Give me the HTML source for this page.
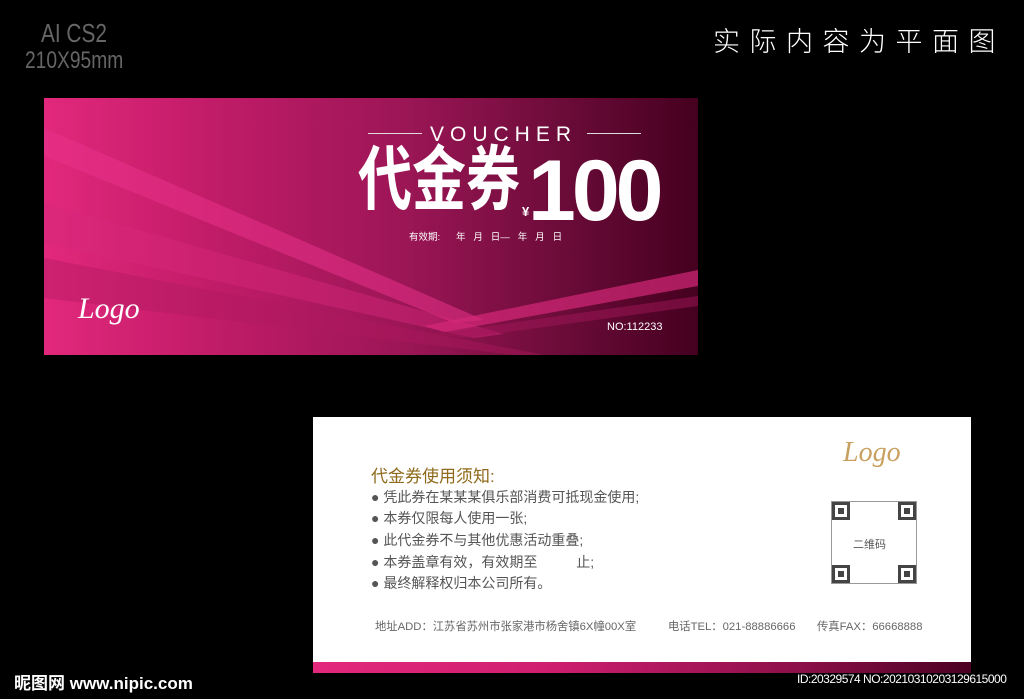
<!DOCTYPE html>
<html><head><meta charset="utf-8"><style>
*{margin:0;padding:0;box-sizing:border-box}
body{width:1024px;height:699px;background:#000;position:relative;overflow:hidden;font-family:"Liberation Sans","Noto Sans CJK SC",sans-serif}
.a{position:absolute;white-space:nowrap}
.front{left:44px;top:98px;width:654px;height:257px;background:linear-gradient(90deg,#e2287c 0%,#c21c68 25%,#9c1656 55%,#6a0b38 80%,#45001f 100%);overflow:hidden}
.back{left:313px;top:417px;width:658px;height:256px;background:#fff}
.band{left:0;bottom:0;width:658px;height:11px;background:linear-gradient(90deg,#e2287c 0%,#d01f70 35%,#8a0f48 75%,#4a0022 100%)}
.logo{font-family:"Liberation Serif",serif;font-style:italic}
.li{font-size:14px;color:#555;left:58px}
.q{position:absolute;width:18px;height:18px;background:#fff;border:3px solid #444}
.q:after{content:"";position:absolute;left:3px;top:3px;width:6px;height:6px;background:#444}
</style></head><body>
<div class="a" style="left:41px;top:18px;font-size:26px;color:#666;transform:scaleX(0.8);transform-origin:left">AI CS2</div>
<div class="a" style="left:25px;top:47px;font-size:24px;color:#666;transform:scaleX(0.8);transform-origin:left">210X95mm</div>
<div class="a" style="left:713px;top:20px;font-size:27px;color:#fff;letter-spacing:9.5px;font-weight:300">实际内容为平面图</div>

<div class="a front">
<svg width="654" height="257" style="position:absolute;left:0;top:0">
<polygon points="0,30 0,58 410,225 440,222" fill="#e8328a" opacity="0.55"/>
<polygon points="0,105 0,145 430,240 460,236" fill="#d8287c" opacity="0.45"/>
<polygon points="0,160 0,200 470,257 500,257" fill="#b01a60" opacity="0.4"/>
<polygon points="380,228 654,172 654,188 400,234" fill="#d42878" opacity="0.7"/>
<polygon points="390,236 654,198 654,208 420,240" fill="#a01558" opacity="0.5"/>
</svg>
<div class="a" style="left:324px;top:35px;width:54px;height:1px;background:#ddd"></div>
<div class="a" style="left:386px;top:25px;font-size:21px;color:#fff;letter-spacing:6px">VOUCHER</div>
<div class="a" style="left:543px;top:35px;width:54px;height:1px;background:#ddd"></div>
<div class="a" style="left:314px;top:46px;font-size:54px;line-height:56px;color:#fff;font-weight:bold;transform:scaleY(1.3);transform-origin:top left">代金券</div>
<div class="a" style="left:478px;top:106px;font-size:13px;color:#fff;font-weight:bold">¥</div>
<div class="a" style="left:484px;top:50px;font-size:86px;line-height:86px;color:#fff;font-weight:bold;letter-spacing:-4px">100</div>
<div class="a" style="left:365px;top:131px;font-size:9.5px;color:#fff">有效期:&nbsp;&nbsp;&nbsp;&nbsp;&nbsp;&nbsp;年&nbsp;&nbsp;&nbsp;月&nbsp;&nbsp;&nbsp;日—&nbsp;&nbsp;&nbsp;年&nbsp;&nbsp;&nbsp;月&nbsp;&nbsp;&nbsp;日</div>
<div class="a logo" style="left:34px;top:194px;font-size:30px;color:#fff">Logo</div>
<div class="a" style="left:563px;top:223px;font-size:11px;color:#fff">NO:112233</div>
</div>

<div class="a back">
<div class="a logo" style="left:530px;top:20px;font-size:28px;color:#c9a060">Logo</div>
<div class="a" style="left:58px;top:45px;font-size:17px;color:#8f6a1a">代金券使用须知:</div>
<div class="a li" style="top:70px">● 凭此券在某某某俱乐部消费可抵现金使用;</div>
<div class="a li" style="top:91px">● 本券仅限每人使用一张;</div>
<div class="a li" style="top:113px">● 此代金券不与其他优惠活动重叠;</div>
<div class="a li" style="top:135px">● 本券盖章有效，有效期至&nbsp;&nbsp;&nbsp;&nbsp;&nbsp;&nbsp;&nbsp;&nbsp;&nbsp;&nbsp;止;</div>
<div class="a li" style="top:156px">● 最终解释权归本公司所有。</div>
<div class="a" style="left:518px;top:84px;width:86px;height:83px;border:1px solid #999">
<div class="q" style="left:0;top:0"></div><div class="q" style="right:0;top:0"></div>
<div class="q" style="left:0;bottom:0"></div><div class="q" style="right:0;bottom:0"></div>
<div class="a" style="left:21px;top:34px;font-size:11px;color:#555">二维码</div>
</div>
<div class="a" style="left:62px;top:201px;font-size:11.3px;color:#666">地址ADD：江苏省苏州市张家港市杨舍镇6X幢00X室</div>
<div class="a" style="left:355px;top:201px;font-size:11.3px;color:#666">电话TEL：021-88886666</div>
<div class="a" style="left:504px;top:201px;font-size:11.3px;color:#666">传真FAX：66668888</div>
<div class="a band"></div>
</div>

<div class="a" style="left:14px;top:669px;font-size:17px;color:#fff;font-weight:bold">昵图网 www.nipic.com</div>
<div class="a" style="left:797px;top:672px;font-size:12px;color:#fff;letter-spacing:-0.5px">ID:20329574 NO:20210310203129615000</div>
</body></html>
